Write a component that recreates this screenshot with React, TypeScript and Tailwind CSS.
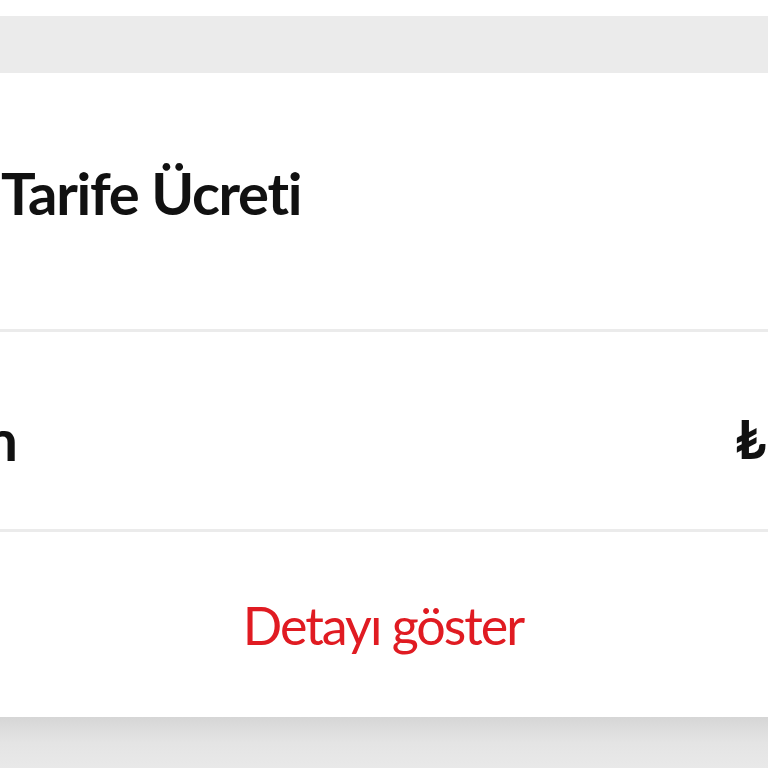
import React from "react";

export default function App() {
  const font = { fontFamily: "Lato, 'Open Sans', 'Liberation Sans', sans-serif" };
  return (
    <div className="w-[768px] h-[768px] overflow-hidden bg-white flex flex-col" style={font}>
      <div className="h-[16px] bg-white shrink-0" />
      <div className="h-[57px] bg-[#ebebeb] shrink-0" />
      <div className="bg-white flex flex-col shrink-0">
        <div className="h-[256px] flex items-center pl-[1px] pb-[16px]">
          <span className="text-[58px] font-bold text-[#111111] leading-none whitespace-nowrap tracking-[-1.3px]">
            Tarife Ücreti
          </span>
        </div>
        <div className="h-[3px] bg-[#ebebeb]" />
        <div className="h-[197px] flex items-center justify-between pt-[16px]">
          <div className="w-[18px] overflow-hidden flex justify-end">
            <span className="text-[58px] font-bold text-[#111111] leading-none whitespace-nowrap">
              Kampanyalı Tarifen
            </span>
          </div>
          <div className="w-[33px] overflow-hidden flex justify-start">
            <span className="text-[54px] font-bold text-[#111111] leading-none whitespace-nowrap">
              ₺ 99,00
            </span>
          </div>
        </div>
        <div className="h-[3px] bg-[#ebebeb]" />
        <div className="h-[185px] flex items-center justify-center pr-[2px]">
          <span className="text-[52px] text-[#e01b22] leading-none whitespace-nowrap tracking-[-2px]">
            Detayı göster
          </span>
        </div>
      </div>
      <div className="flex-1 bg-gradient-to-b from-[#d6d6d6] via-[#e4e4e4] to-[#e9e9e9]" />
    </div>
  );
}
